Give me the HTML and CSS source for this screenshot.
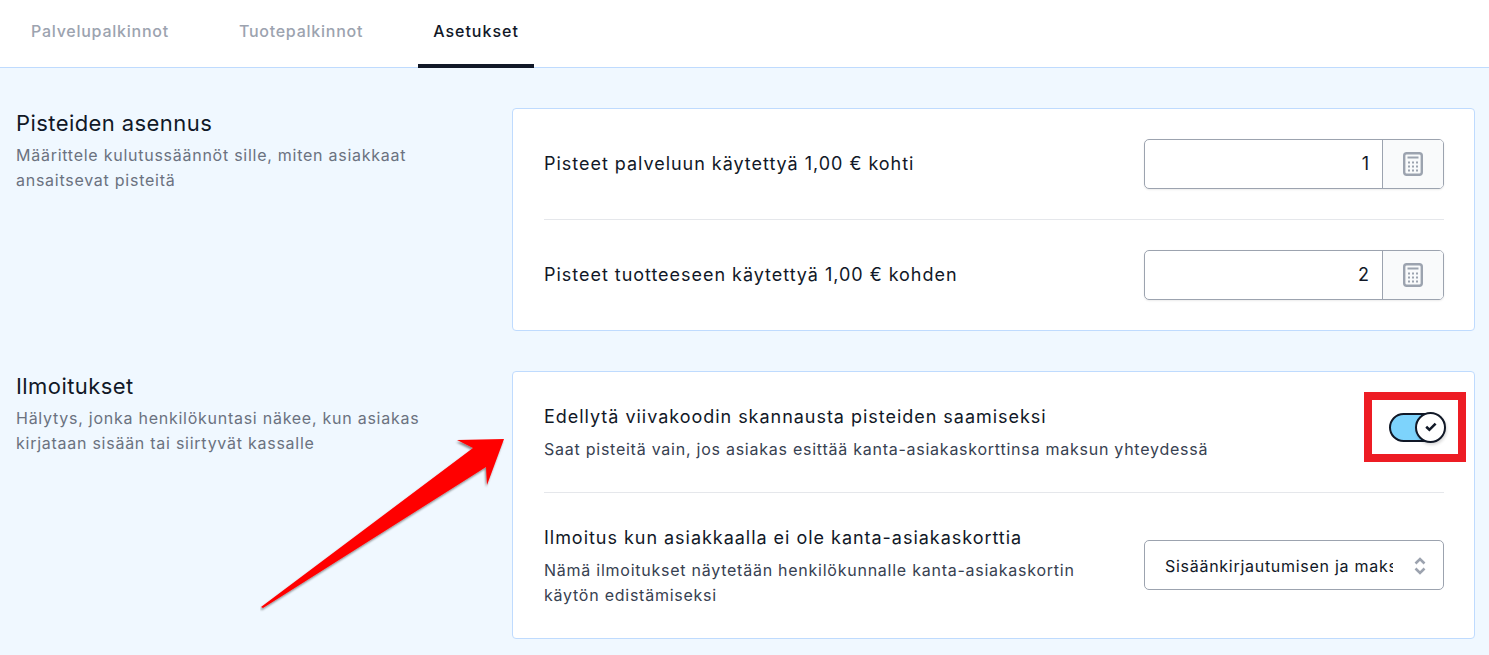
FILE: index.html
```html
<!DOCTYPE html>
<html lang="fi">
<head>
<meta charset="utf-8">
<title>Asetukset</title>
<link rel="stylesheet" href="styles.css">
</head>
<body>
<nav class="tabs">
  <a class="tab">Palvelupalkinnot</a>
  <a class="tab">Tuotepalkinnot</a>
  <a class="tab active">Asetukset</a>
</nav>
<main class="content">
  <section class="group">
    <div class="intro">
      <h2>Pisteiden asennus</h2>
      <p>Määrittele kulutussäännöt sille, miten asiakkaat ansaitsevat pisteitä</p>
    </div>
    <div class="card">
      <div class="row">
        <div class="label"><div class="title">Pisteet palveluun käytettyä 1,00 € kohti</div></div>
        <div class="field">
          <div class="value">1</div>
          <div class="addon"><svg class="calc" viewBox="0 0 20 24"><rect x="1.2" y="1.2" width="17.6" height="21.6" rx="2.5" fill="none" stroke="#9ca3af" stroke-width="2.4"/><path d="M4.5 5.5h11" stroke="#9ca3af" stroke-width="2"/><path d="M5 10.5h2M9 10.5h2M13 10.5h2M5 14.5h2M9 14.5h2M13 14.5h2M5 18.5h2M9 18.5h2M13 18.5h2" stroke="#9ca3af" stroke-width="2.2"/></svg></div>
        </div>
      </div>
      <div class="row">
        <div class="label"><div class="title">Pisteet tuotteeseen käytettyä 1,00 € kohden</div></div>
        <div class="field">
          <div class="value">2</div>
          <div class="addon"><svg class="calc" viewBox="0 0 20 24"><rect x="1.2" y="1.2" width="17.6" height="21.6" rx="2.5" fill="none" stroke="#9ca3af" stroke-width="2.4"/><path d="M4.5 5.5h11" stroke="#9ca3af" stroke-width="2"/><path d="M5 10.5h2M9 10.5h2M13 10.5h2M5 14.5h2M9 14.5h2M13 14.5h2M5 18.5h2M9 18.5h2M13 18.5h2" stroke="#9ca3af" stroke-width="2.2"/></svg></div>
        </div>
      </div>
    </div>
  </section>
  <section class="group">
    <div class="intro">
      <h2>Ilmoitukset</h2>
      <p>Hälytys, jonka henkilökuntasi näkee, kun asiakas kirjataan sisään tai siirtyvät kassalle</p>
    </div>
    <div class="card">
      <div class="row">
        <div class="label">
          <div class="title">Edellytä viivakoodin skannausta pisteiden saamiseksi</div>
          <div class="sub wide">Saat pisteitä vain, jos asiakas esittää kanta-asiakaskorttinsa maksun yhteydessä</div>
        </div>
        <div class="toggle">
          <span class="knob"><svg viewBox="0 0 12 10" class="tick"><path d="M1.2 4.8l3.2 3 6.2-6.2" fill="none" stroke="#111827" stroke-width="2.6"/></svg></span>
        </div>
      </div>
      <div class="row">
        <div class="label">
          <div class="title">Ilmoitus kun asiakkaalla ei ole kanta-asiakaskorttia</div>
          <div class="sub">Nämä ilmoitukset näytetään henkilökunnalle kanta-asiakaskortin käytön edistämiseksi</div>
        </div>
        <div class="select">
          <span class="select-text">Sisäänkirjautumisen ja maksun yhteydessä</span>
          <svg class="chev" viewBox="0 0 12 20"><path d="M1.5 7.5L6 3l4.5 4.5M1.5 12.5L6 17l4.5-4.5" fill="none" stroke="#9ca3af" stroke-width="2.6"/></svg>
        </div>
      </div>
    </div>
  </section>
</main>
<svg class="arrow" viewBox="0 0 260 180"><defs><filter id="sh" x="-10%" y="-10%" width="120%" height="120%"><feDropShadow dx="-1" dy="2" stdDeviation="1" flood-color="#000" flood-opacity=".45"/></filter></defs><path d="M1 170L213 11 197 3 244 2 227 48 226 30 3 171Z" fill="#f00" filter="url(#sh)"/></svg>
<div class="highlight"></div>
</body>
</html>
```
FILE: styles.css
```css
* { box-sizing: border-box; }
html, body { margin: 0; height: 655px; overflow: hidden; }
body { position: relative; background: #f0f8ff; font-family: Inter, "Liberation Sans", sans-serif; color: #111827; }
.tabs { display: flex; height: 68px; background: #fff; border-bottom: 1px solid #bfdbfe; padding-left: 16px; gap: 40px; }
.tab { display: flex; align-items: center; justify-content: center; height: 68px; padding: 0 15px 6px; font-size: 16px; font-weight: 500; letter-spacing: .75px; color: #9ca3af; }
.tab.active { color: #111827; border-bottom: 4px solid #111827; padding-bottom: 2px; letter-spacing: 1px; }
.content { padding: 40px 14px 0 16px; display: flex; flex-direction: column; gap: 40px; }
.group { display: flex; }
.intro { width: 496px; flex: none; padding-right: 80px; }
.intro h2 { margin: 0; font-size: 22px; font-weight: 400; line-height: 30px; letter-spacing: .42px; }
.intro p { margin: 5px 0 0; font-size: 16px; line-height: 25px; letter-spacing: .74px; color: #6b7280; }
.card { flex: 1; background: #fff; border: 1px solid #bfdbfe; border-radius: 4px; padding: 0 30px 0 31px; }
.row { display: flex; align-items: center; justify-content: space-between; padding: 30px 0; }
.row + .row { border-top: 1px solid #e5e7eb; }
.label { width: 600px; }
.title { font-size: 18px; line-height: 30px; letter-spacing: .97px; }
.sub { margin-top: 5px; width: 560px; font-size: 16px; line-height: 25px; letter-spacing: .75px; color: #374151; }
.sub.wide { width: auto; white-space: nowrap; }
.field { display: flex; width: 300px; height: 50px; border: 1px solid #9ca3af; border-radius: 5px; overflow: hidden; box-shadow: 0 1px 2px rgba(0,0,0,.08); }
.value { flex: 1; text-align: right; padding-right: 13px; font-size: 18px; line-height: 48px; border-right: 1px solid #9ca3af; }
.addon { width: 60px; display: flex; align-items: center; justify-content: center; background: #f9fafb; }
.calc { width: 20px; height: 24px; }
.toggle { width: 56px; height: 29px; margin: 0 -1px 10px 0; border: 2px solid #111827; border-radius: 15px; background: #7dd3fc; position: relative; }
.knob { position: absolute; right: -3px; top: -3px; width: 31px; height: 31px; border: 2px solid #111827; border-radius: 50%; background: #fff; display: flex; align-items: center; justify-content: center; box-shadow: 1px 2px 3px rgba(0,0,0,.15); }
.tick { width: 12px; height: 10px; }
.select { display: flex; align-items: center; width: 300px; height: 50px; margin-bottom: 1px; padding: 1px 0 0 20px; border: 1px solid #9ca3af; border-radius: 5px; }
.select-text { width: 228px; overflow: hidden; white-space: nowrap; font-size: 16px; letter-spacing: .72px; }
.chev { width: 12px; height: 20px; margin-left: 21px; }
.arrow { position: absolute; left: 260px; top: 437px; width: 260px; height: 180px; }
.highlight { position: absolute; left: 1364px; top: 392px; width: 102px; height: 70px; border: 8px solid #ed1c24; }
```
